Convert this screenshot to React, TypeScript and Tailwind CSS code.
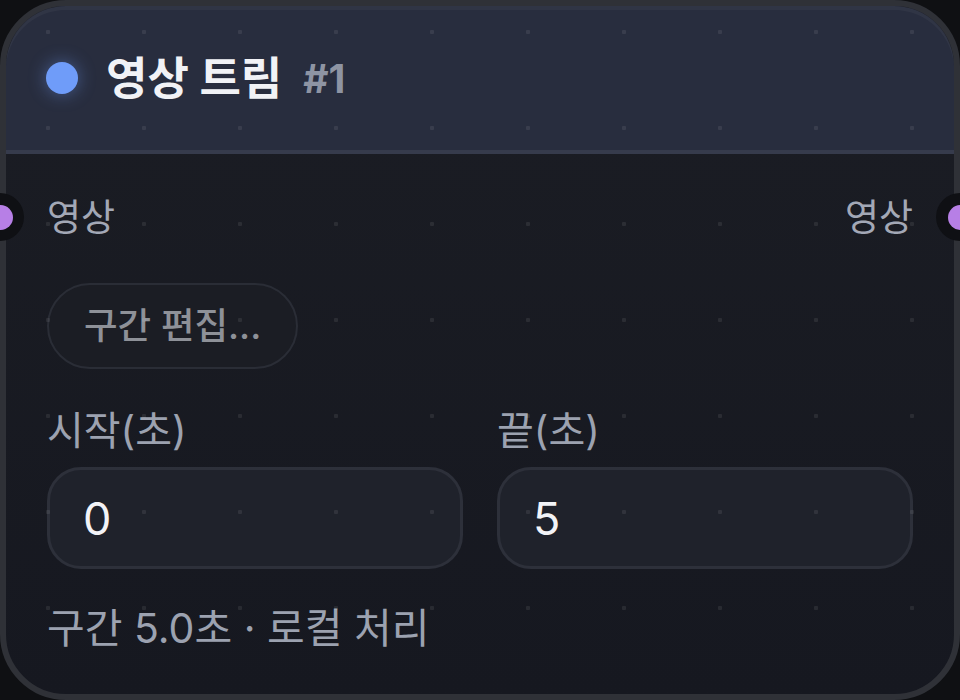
import { useState } from 'react';

// Handle on the node edge (input / output port)
function Port({ side }: { side: 'left' | 'right' }) {
  return (
    <div
      className={
        side === 'left'
          ? 'absolute left-[-30px] top-[187px] w-[48px] h-[48px] rounded-full bg-[#0f1014] flex items-center justify-center'
          : 'absolute right-[-30px] top-[187px] w-[48px] h-[48px] rounded-full bg-[#0f1014] flex items-center justify-center'
      }
    >
      <div className="w-[25px] h-[25px] rounded-full bg-[#b77fe6]" />
    </div>
  );
}

export default function App() {
  const [start, setStart] = useState('0');
  const [end, setEnd] = useState('5');
  const dur = Math.max(0, Number(end) - Number(start));

  return (
    <div className="relative w-[960px] h-[700px] overflow-hidden bg-[#0f1013] font-['Inter','Noto_Sans_CJK_KR',sans-serif]">
      <div className="relative h-full flex flex-col rounded-[66px] border-[6px] border-[#2f3137] bg-gradient-to-b from-[#1b1d24] to-[#161820]">
        {/* header */}
        <div className="h-[148px] flex items-center pl-[40px] rounded-t-[60px] bg-[#282d3e] border-b-4 border-[#363b4c] shadow-[inset_0_4px_0_rgba(255,255,255,0.04)]">
          <span className="w-[32px] h-[32px] rounded-full bg-[#6f9cf9] shadow-[0_0_18px_rgba(111,156,249,0.45)]" />
          <span className="ml-[28px] text-[45px] font-bold text-[#f1f2f6] leading-none">영상 트림</span>
          <span className="ml-[21px] text-[39px] font-bold text-[#8e94a3] leading-none">#1</span>
        </div>

        {/* body */}
        <div className="flex-1 flex flex-col px-[41px] pt-[40px]">
          <div className="h-[46px] flex items-center justify-between text-[37px] leading-none text-[#a3a8b6]">
            <span>영상</span>
            <span>영상</span>
          </div>

          <button className="mt-[43px] self-start h-[86px] px-[35px] rounded-full border-2 border-[#2a2d36] bg-[#1b1d24] text-[36.5px] leading-none font-medium text-[#8e9198]">
            구간 편집...
          </button>

          <div className="mt-[40px] grid grid-cols-2 gap-x-[34px]">
            <div className="flex flex-col">
              <span className="h-[44px] flex items-center text-[40px] leading-none text-[#9ca2b0]">시작(초)</span>
              <input
                value={start}
                onChange={(e) => setStart(e.target.value)}
                className="mt-[14px] h-[102px] px-[33px] rounded-[34px] border-[3px] border-[#2d303a] bg-[#1f222b] text-[45px] text-[#f2f3f7] outline-none"
              />
            </div>
            <div className="flex flex-col">
              <span className="h-[44px] flex items-center text-[40px] leading-none text-[#9ca2b0]">끝(초)</span>
              <input
                value={end}
                onChange={(e) => setEnd(e.target.value)}
                className="mt-[14px] h-[102px] px-[33px] rounded-[34px] border-[3px] border-[#2d303a] bg-[#1f222b] text-[45px] text-[#f2f3f7] outline-none"
              />
            </div>
          </div>

          <p className="mt-[35px] h-[48px] flex items-center text-[41px] leading-none text-[#9ca2b0]">
            구간 {dur.toFixed(1)}초 · 로컬 처리
          </p>
        </div>

        <Port side="left" />
        <Port side="right" />
      </div>

      {/* canvas dot grid showing through */}
      <div className="pointer-events-none absolute inset-0 bg-[radial-gradient(circle,rgba(255,255,255,0.08)_2px,transparent_2.5px)] bg-size-[96px_96px] bg-position-[0px_-16px]" />
    </div>
  );
}
